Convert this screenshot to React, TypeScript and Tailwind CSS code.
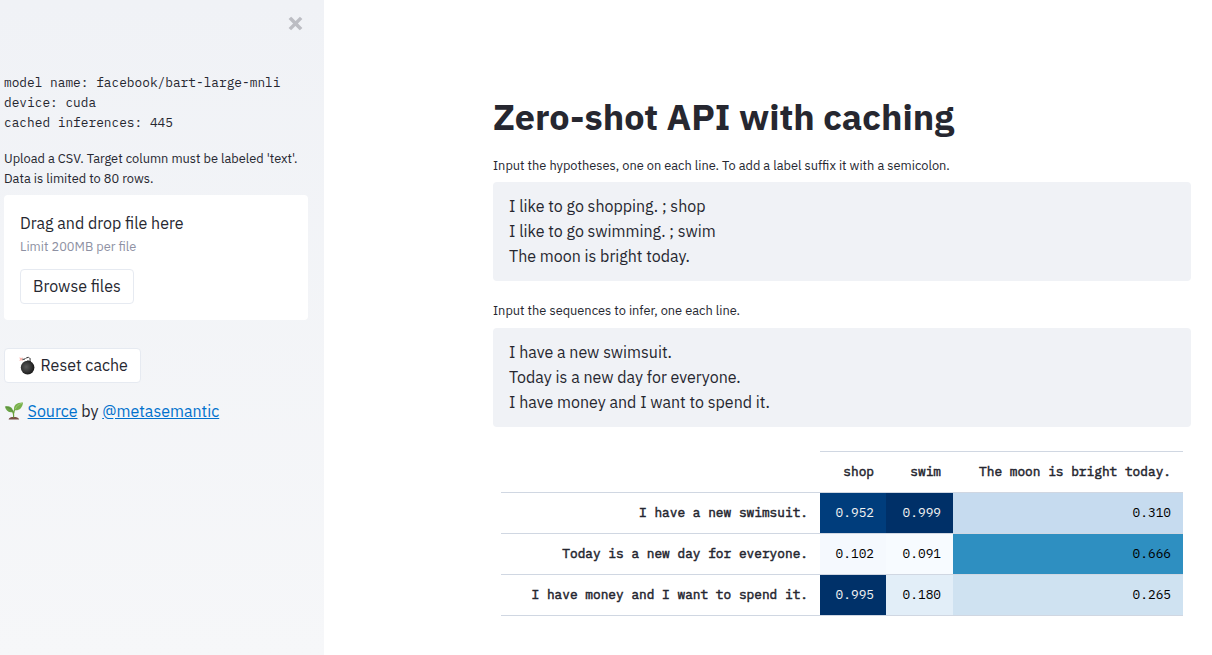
import type { ReactNode } from 'react';

function CloseIcon() {
  return (
    <svg viewBox="0 0 15 15" className="h-[15px] w-[15px]" aria-hidden="true">
      <path d="M3.1 3.1 11.9 11.9M11.9 3.1 3.1 11.9" stroke="#bcbdc3" strokeWidth="3.5" strokeLinecap="square" />
    </svg>
  );
}

function BombIcon() {
  return (
    <svg viewBox="0 0 20 20" className="h-5 w-5 shrink-0" aria-hidden="true">
      <defs>
        <radialGradient id="bomb" cx="0.4" cy="0.45" r="0.6">
          <stop offset="0" stopColor="#5a5a5a" />
          <stop offset="0.55" stopColor="#383838" />
          <stop offset="1" stopColor="#171717" />
        </radialGradient>
      </defs>
      <path d="M2.4 1.2 4 2 6 1.4 5.4 3 6.2 4.8 4.2 4.3 2.4 5 3 3.2Z" fill="#f9b5ae" />
      <path d="M5 3.2C7.5 4 8.2 2.4 10 1.6 11.9 1 13.4 1.6 13.2 4.6" fill="none" stroke="#777" strokeWidth="1" />
      <path d="M6.2 3.4 7.8 3M9.6 1.8 11.4 1.4M13 2.4V3.6" stroke="#333" strokeWidth="1" />
      <path d="M10.2 4.6 13.6 4.4 14.4 7.2 9.4 7.2Z" fill="#333" />
      <circle cx="10.6" cy="11.6" r="6.8" fill="url(#bomb)" />
    </svg>
  );
}

function SeedlingIcon() {
  return (
    <svg viewBox="0 0 20 20" className="h-5 w-5 shrink-0" aria-hidden="true">
      <path d="M4.6 18.4C5 16.6 7.1 16 9.7 16S14.6 16.6 15.2 18.4Z" fill="#795046" />
      <path d="M9.6 16.5C9.9 13.2 9.3 10.4 6.8 8.2M9.7 12.5C9.8 9.4 11 6.6 14 4.2" fill="none" stroke="#689f38" strokeWidth="1.2" />
      <path d="M0.9 5.4C4.8 4.6 8.7 5.6 9.2 10.9 5.3 11.9 2 10.2 0.9 5.4Z" fill="#6aa345" />
      <path d="M10.2 9.2C9 4.2 13 1.1 19 1.4 18.5 6.5 15.3 10 10.2 9.2Z" fill="#78b04a" />
      <path d="M11.4 7.8C12.6 5 14.8 3.2 18 2.2" fill="none" stroke="#9cc878" strokeWidth="1" />
      <path d="M2 6C5 6.4 7.4 8 8.8 10.6" fill="none" stroke="#558a3a" strokeWidth="0.8" />
    </svg>
  );
}

function Button({ children, className }: { children: ReactNode; className: string }) {
  return (
    <button className={`flex h-[35px] items-center rounded border border-[#e6eaf1] bg-white leading-[25.6px] ${className}`}>
      {children}
    </button>
  );
}

function TextArea({ lines }: { lines: string[] }) {
  return (
    <div className="h-[99px] rounded bg-[#f0f2f6] px-4 pt-3">
      {lines.map((line) => (
        <p key={line} className="leading-[25px]">{line}</p>
      ))}
    </div>
  );
}

const rows = [
  {
    label: 'I have a new swimsuit.',
    cells: [
      { v: '0.952', c: 'bg-[#003d7c] text-[#f1f1f1]' },
      { v: '0.999', c: 'bg-[#003068] text-[#f1f1f1]' },
      { v: '0.310', c: 'bg-[#c6dbef] text-black' },
    ],
  },
  {
    label: 'Today is a new day for everyone.',
    cells: [
      { v: '0.102', c: 'bg-[#f5f9fe] text-black' },
      { v: '0.091', c: 'bg-[#f7fbff] text-black' },
      { v: '0.666', c: 'bg-[#2e8fc1] text-black' },
    ],
  },
  {
    label: 'I have money and I want to spend it.',
    cells: [
      { v: '0.995', c: 'bg-[#003169] text-[#f1f1f1]' },
      { v: '0.180', c: 'bg-[#e2eef8] text-black' },
      { v: '0.265', c: 'bg-[#cfe2f1] text-black' },
    ],
  },
];

const gridRow = 'grid h-[41px] grid-cols-[319px_66px_67px_230px] text-right';
const heading = 'pr-3 [-webkit-text-stroke:0.5px_#262730]';

function ScoreTable() {
  return (
    <div className="ml-2 w-[682px] font-['IBM_Plex_Mono','Liberation_Mono',monospace] text-[12.8px] leading-[40px]">
      <div className={gridRow}>
        <span />
        {['shop', 'swim', 'The moon is bright today.'].map((h) => (
          <span key={h} className={`border-t border-[#d0d7e2] ${heading}`}>{h}</span>
        ))}
      </div>
      {rows.map((row) => (
        <div key={row.label} className={`${gridRow} border-t border-[#d0d7e2]`}>
          <span className={heading}>{row.label}</span>
          {row.cells.map((cell) => (
            <span key={cell.v} className={`pr-3 ${cell.c}`}>{cell.v}</span>
          ))}
        </div>
      ))}
      <div className="h-px bg-[#d0d7e2]" />
    </div>
  );
}

export default function App() {
  return (
    <div className="flex h-[655px] w-[1212px] overflow-hidden bg-white font-['IBM_Plex_Sans',Roboto,sans-serif] text-base text-[#262730]">
      <aside className="flex w-[324px] shrink-0 flex-col bg-linear-to-b from-[#f0f2f6] to-[#f6f7f9] pr-4 pl-1">
        <div className="flex h-[73px] justify-end pt-4 pr-[5px]">
          <CloseIcon />
        </div>
        <pre className="font-['IBM_Plex_Mono','Liberation_Mono',monospace] text-[12.8px] leading-[20px]">
          {'model name: facebook/bart-large-mnli\ndevice: cuda\ncached inferences: 445'}
        </pre>
        <p className="mt-4 text-[12.8px] leading-[20px]">
          Upload a CSV. Target column must be labeled 'text'.
          <br />
          Data is limited to 80 rows.
        </p>
        <section className="mt-[6px] h-[125px] rounded bg-white px-4 pt-4">
          <p className="leading-[25px]">Drag and drop file here</p>
          <p className="mt-px text-[12.8px] leading-[20px] text-[#8e91a3]">Limit 200MB per file</p>
          <Button className="mt-3 w-[114px] pl-3">Browse files</Button>
        </section>
        <Button className="mt-7 w-[137px] pl-3">
          <BombIcon />
          <span className="ml-[3.6px]">Reset cache</span>
        </Button>
        <p className="mt-[15px] flex h-[25px] items-center">
          <SeedlingIcon />
          <a className="ml-[3.6px] text-[#0071cd] underline">Source</a>
          <span className="whitespace-pre"> by </span>
          <a className="text-[#0071cd] underline">@metasemantic</a>
        </p>
      </aside>
      <main className="w-[867px] pt-[95px] pl-[169px]">
        <h1 className="text-[36px] leading-[43px] font-bold">Zero-shot API with caching</h1>
        <p className="mt-[18px] mb-[6px] text-[12.8px] leading-[20px]">
          Input the hypotheses, one on each line. To add a label suffix it with a semicolon.
        </p>
        <TextArea lines={['I like to go shopping. ; shop', 'I like to go swimming. ; swim', 'The moon is bright today.']} />
        <p className="mt-[20px] mb-[7px] text-[12.8px] leading-[20px]">Input the sequences to infer, one each line.</p>
        <TextArea lines={['I have a new swimsuit.', 'Today is a new day for everyone.', 'I have money and I want to spend it.']} />
        <div className="mt-6">
          <ScoreTable />
        </div>
      </main>
    </div>
  );
}
